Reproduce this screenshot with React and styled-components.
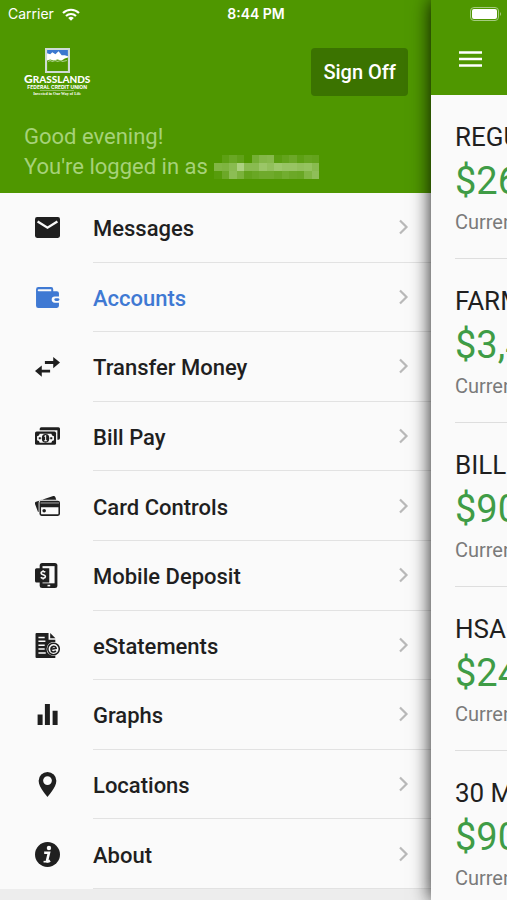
import React from "react";
import styled, { createGlobalStyle } from "styled-components";

const GREEN = "#4f9700";
const INK = "#1f1f1f";

const MailIcon = () => (
  <Icon viewBox="0 0 24 24">
    <rect x="0" y="2" width="24" height="20" rx="2" fill={INK} />
    <path d="M2.5 6.2L12 12.2l9.500-6" fill="none" stroke="#fafafa" strokeWidth="2.200" />
  </Icon>
);

const WalletIcon = () => (
  <Icon viewBox="0 0 24 24">
    <path
      fill="#3f79d3"
      d="M3.200 2h12.300a2 2 0 0 1 2 2v2H21a2 2 0 0 1 2 2v3h-4a3 3 0 0 0 0 6h4v3a2 2 0 0 1-2 2H3.200a2.200 2.200 0 0 1-2.200-2.200V4.200A2.200 2.200 0 0 1 3.200 2z"
    />
    <path d="M3.600 4h12v2h-12a1 1 0 0 1 0-2z" fill="#fafafa" />
    <rect x="18.600" y="12.600" width="4.800" height="2.800" rx="1.400" fill="#3f79d3" />
  </Icon>
);

const TransferIcon = () => (
  <Icon viewBox="0 0 24 24">
    <g fill={INK}>
      <path d="M9.500 6.800h8V2.800L24 8.200l-6.500 5.400V9.600h-8z" />
      <path d="M14.500 15h-8V11L0 16.400l6.500 5.400v-4h8z" />
    </g>
  </Icon>
);

const BillIcon = () => (
  <Icon viewBox="0 0 24 24">
    <path d="M4.500 6V4.500A1.500 1.500 0 0 1 6 3h16.500A1.500 1.500 0 0 1 24 4.500v9a1.500 1.500 0 0 1-1.500 1.500H21.500V6z" fill={INK} />
    <rect x="0" y="7.300" width="20.200" height="12.700" rx="1.500" fill={INK} />
    <path d="M4.500 9.300h11.200a2.600 2.600 0 0 0 2.500 2.400v4a2.600 2.600 0 0 0-2.500 2.400H4.500A2.600 2.600 0 0 0 2 15.700v-4a2.600 2.600 0 0 0 2.500-2.400z" fill="#fafafa" />
    <ellipse cx="10.100" cy="13.700" rx="3.600" ry="4.200" fill={INK} />
    <path d="M3.600 13.700h2M14.600 13.700h2" stroke={INK} strokeWidth="1.800" />
    <path d="M9 12l1.200-.8v5M8.800 16h2.800" stroke="#fafafa" strokeWidth="1" fill="none" />
  </Icon>
);

const CardIcon = () => (
  <Icon viewBox="0 0 24 24">
    <path d="M0 9.500c-.3-1 .1-1.700 1-2L17.500 1.900c.9-.3 1.700.1 2 1l.9 2.700H6.500a3 3 0 0 0-3 3v8.700L2.800 17z" fill={INK} />
    <rect x="4.300" y="6.400" width="19.700" height="14.600" rx="2" fill={INK} />
    <path d="M5.300 8.600h17.700" stroke="#8a8a8a" strokeWidth="1.200" />
    <path d="M5.800 12.700h16.700v6a.8.800 0 0 1-.8.800H6.600a.8.800 0 0 1-.8-.8z" fill="#fafafa" />
    <circle cx="8.800" cy="16" r="1.700" fill={INK} />
  </Icon>
);

const DepositIcon = () => (
  <Icon viewBox="0 0 24 24">
    <rect x="4.500" y="0" width="17" height="24" rx="2.400" fill={INK} />
    <rect x="7.200" y="3" width="11.600" height="16.500" fill="#fafafa" />
    <path d="M1.500 5h12.200v13.700H1.500A1.500 1.500 0 0 1 0 17.200V6.500A1.500 1.500 0 0 1 1.500 5z" fill={INK} />
    <path d="M9.800 8.900c-1-1.200-4-1.100-4 .7 0 2 4.200 1.300 4.200 3.400 0 1.900-3.200 2-4.400.6M7.800 7v1.400M7.800 14.400v1.400" fill="none" stroke="#fafafa" strokeWidth="1.500" />
    <path d="M12 21.700h2.600" stroke="#fafafa" strokeWidth="1.500" />
  </Icon>
);

const StatementIcon = () => (
  <Icon viewBox="0 0 24 24">
    <path d="M1.500 0H13v6.500h6.500V24h-18A1 1 0 0 1 .5 23V1a1 1 0 0 1 1-1z" fill={INK} />
    <path d="M14.600 0l5 5h-5z" fill={INK} />
    <path d="M3.300 4.300h6M3.300 8h6.700M3.300 11.700h6M3.300 15.400h6M3.300 19.100h7" stroke="#fafafa" strokeWidth="1.400" />
    <circle cx="17.800" cy="15.300" r="6.700" fill="#fafafa" />
    <circle cx="17.800" cy="15.300" r="5.500" fill="none" stroke={INK} strokeWidth="1.500" />
    <path d="M15.300 15.600l5-.9c-.3-3-5-2.300-5 .9 0 3 3.200 3.200 4.800 1.600" fill="none" stroke={INK} strokeWidth="1.500" />
  </Icon>
);

const GraphIcon = () => (
  <Icon viewBox="0 0 24 24">
    <path d="M2.500 12h4.800v10H2.500zM9.500 2h4.800v20H9.500zM16.900 8.500h4.800V22h-4.800z" fill={INK} />
  </Icon>
);

const PinIcon = () => (
  <Icon viewBox="0 0 24 24">
    <path d="M12 0a8.500 8.500 0 0 0-8.500 8.500C3.500 15 12 24 12 24s8.500-9 8.500-15.500A8.500 8.500 0 0 0 12 0zm0 12.400a4.200 4.200 0 1 1 0-8.400 4.200 4.200 0 0 1 0 8.400z" fill={INK} />
  </Icon>
);

const InfoIcon = () => (
  <Icon viewBox="0 0 24 24">
    <circle cx="12" cy="12" r="12" fill={INK} />
    <circle cx="13.400" cy="5.700" r="2.100" fill="#fafafa" />
    <path d="M8.800 10.300h4.600l-1.800 7.500c-.3 1.300 1.400 1 2.800.1" fill="none" stroke="#fafafa" strokeWidth="2.500" />
    <path d="M8.200 18.900h4" stroke="#fafafa" strokeWidth="1.600" />
  </Icon>
);

const menu = [
  { label: "Messages", icon: MailIcon },
  { label: "Accounts", icon: WalletIcon, active: true },
  { label: "Transfer Money", icon: TransferIcon },
  { label: "Bill Pay", icon: BillIcon },
  { label: "Card Controls", icon: CardIcon },
  { label: "Mobile Deposit", icon: DepositIcon },
  { label: "eStatements", icon: StatementIcon },
  { label: "Graphs", icon: GraphIcon },
  { label: "Locations", icon: PinIcon },
  { label: "About", icon: InfoIcon },
];

const accounts = [
  { name: "REGU", balance: "$26" },
  { name: "FARM", balance: "$3,4" },
  { name: "BILL", balance: "$90" },
  { name: "HSA", balance: "$24" },
  { name: "30 M", balance: "$90" },
];

// opacity of each block in the masked user name, row by row
const mask = [
  [0, 10, 18, 12, 0, 26, 36, 38, 8, 14, 20, 10, 16, 14],
  [34, 32, 40, 64, 40, 40, 52, 46, 54, 50, 50, 46, 48, 40],
  [6, 20, 42, 30, 14, 18, 22, 22, 18, 24, 20, 18, 34, 44],
];

const Logo = () => (
  <Brand>
    <BrandMark viewBox="0 0 24 24" aria-hidden="true">
      <rect width="24" height="24" fill="#cfdcd6" />
      <rect x="2" y="2" width="20" height="20" fill="#fff" />
      <path d="M2 2h20v6l-3-1-3 0-3-4-3 3-3-2-2 2-3-1z" fill="#3b78cf" />
      <path d="M2 12l3-1 3 1 4-1 4 1 3-2 3-1v13H2z" fill={GREEN} />
      <path d="M3 13l2-1 2 1 3-1 2 1 3-1 2 1 4-1" stroke="#a9cf86" fill="none" />
    </BrandMark>
    <BrandName>
      G<small>RASSLANDS</small>
    </BrandName>
    <BrandSub>FEDERAL CREDIT UNION</BrandSub>
    <BrandRule />
    <BrandTag>Invested in Our Way of Life</BrandTag>
  </Brand>
);

const App = () => {
  return (
    <>
      <GlobalStyle />
      <Screen>
        <StatusBar>
          <Carrier>
            Carrier
            <svg width="18" height="13" viewBox="0 0 18 13" aria-hidden="true">
              <g fill="none" stroke="#fff" strokeWidth="2.200">
                <path d="M1 5a11.500 11.500 0 0 1 16 0" />
                <path d="M4 8a7.300 7.300 0 0 1 10 0" />
              </g>
              <path d="M9 12.800L6.200 10a4 4 0 0 1 5.600 0z" fill="#fff" />
            </svg>
          </Carrier>
          <Clock>8:44 PM</Clock>
          <Battery viewBox="0 0 32 14" aria-hidden="true">
            <rect x=".5" y=".5" width="28" height="13" rx="3.500" fill="none" stroke="#a5cb80" />
            <rect x="2" y="2" width="25" height="10" rx="2" fill="#fff" />
            <path d="M30 5a2.500 2.500 0 0 1 0 4z" fill="#a5cb80" />
          </Battery>
        </StatusBar>

        <Drawer>
          <DrawerHead>
            <HeadRow>
              <Logo />
              <SignOff type="button">Sign Off</SignOff>
            </HeadRow>
            <Greeting>
              <span>Good evening!</span>
              <UserLine>
                You're logged in as
                <MaskedName viewBox="0 0 14 3" preserveAspectRatio="none" shapeRendering="crispEdges">
                  {mask.map((row, y) =>
                    row.map((o, x) => (
                      <rect key={`${x}-${y}`} x={x} y={y} width="1" height="1" fill="#e2f2c8" opacity={o / 100} />
                    ))
                  )}
                </MaskedName>
              </UserLine>
            </Greeting>
          </DrawerHead>
          <Menu>
            {menu.map(({ label, icon: ItemIcon, active }) => (
              <MenuItem key={label}>
                <MenuLink href="#" $active={active}>
                  <ItemIcon />
                  <MenuLabel>
                    {label}
                    <Chevron viewBox="0 0 10 16" aria-hidden="true">
                      <path d="M1.500 1.500L8 8l-6.500 6.500" />
                    </Chevron>
                  </MenuLabel>
                </MenuLink>
              </MenuItem>
            ))}
          </Menu>
        </Drawer>

        <Page>
          <PageHead>
            <MenuButton type="button" aria-label="Menu">
              <svg width="23" height="16" viewBox="0 0 23 16">
                <path d="M0 1.500h23M0 8h23M0 14.500h23" stroke="#fff" strokeWidth="2.600" />
              </svg>
            </MenuButton>
          </PageHead>
          <AccountList>
            {accounts.map((a) => (
              <Account key={a.name}>
                <h2>{a.name}</h2>
                <strong>{a.balance}</strong>
                <span>Current</span>
              </Account>
            ))}
          </AccountList>
        </Page>
      </Screen>
    </>
  );
};

export default App;

const GlobalStyle = createGlobalStyle`
  * {
    box-sizing: border-box;
  }
  body {
    margin: 0;
    background: #ededed;
    font-family: Roboto, "Liberation Sans", sans-serif;
    color: ${INK};
  }
`;

const Screen = styled.div`
  position: relative;
  display: grid;
  grid-template-columns: 85% 15%;
  grid-template-rows: 100%;
  height: 100vh;
  min-height: 780px;
  overflow: hidden;
`;

const StatusBar = styled.div`
  position: absolute;
  inset: 0 0 auto;
  z-index: 2;
  display: grid;
  grid-template-columns: 1fr auto 1fr;
  align-items: center;
  height: 28px;
  padding: 0 5px 0 8px;
  color: #fff;
  font: 400 14px/20px Inter, "Liberation Sans", sans-serif;
`;

const Carrier = styled.span`
  display: flex;
  align-items: center;
  gap: 8px;
`;

const Clock = styled.span`
  padding-left: 2px;
  font-weight: 600;
`;

const Battery = styled.svg`
  justify-self: end;
  width: 32px;
  height: 14px;
`;

const Drawer = styled.aside`
  display: flex;
  flex-direction: column;
  padding-bottom: 11px;
`;

const DrawerHead = styled.header`
  padding: 48px 23px 11px 24px;
  background: ${GREEN};
`;

const HeadRow = styled.div`
  display: flex;
  align-items: flex-start;
  justify-content: space-between;
`;

const Brand = styled.div`
  display: flex;
  flex-direction: column;
  align-items: center;
  color: #fff;
  white-space: nowrap;
`;

const BrandMark = styled.svg`
  width: 25px;
  height: 25px;
`;

const BrandName = styled.div`
  height: 12px;
  font: 900 12px/12px Lato, sans-serif;
  small {
    font-size: 10px;
  }
`;

const BrandSub = styled.div`
  height: 5px;
  font: 700 5px/5px Inter, sans-serif;
`;

const BrandRule = styled.div`
  width: 34px;
  height: 1px;
  background: #8dbb5c;
`;

const BrandTag = styled.div`
  height: 6px;
  font: 700 4px/6px "Liberation Serif", serif;
`;

const SignOff = styled.button`
  height: 48px;
  padding: 0 12px;
  border: 0;
  border-radius: 4px;
  background: #3b7300;
  color: #fff;
  font: 500 20px/24px Roboto, sans-serif;
`;

const Greeting = styled.div`
  display: flex;
  flex-direction: column;
  margin-top: 25px;
  color: #a6d279;
  font-size: 22px;
  line-height: 30px;
  white-space: nowrap;
`;

const UserLine = styled.span`
  display: flex;
  align-items: center;
  gap: 6px;
`;

const MaskedName = styled.svg`
  width: 105px;
  height: 24px;
`;

const Menu = styled.ul`
  flex: 1;
  display: grid;
  grid-auto-rows: 1fr;
  margin: 0;
  padding: 0;
  background: #fafafa;
  list-style: none;
`;

const MenuItem = styled.li`
  display: grid;
  min-height: 56px;
`;

const MenuLink = styled.a`
  display: grid;
  grid-template-columns: 93px 1fr;
  align-items: center;
  color: ${(p) => (p.$active ? "#3f79d3" : INK)};
  font-size: 22px;
  font-weight: 500;
  line-height: 28px;
  text-decoration: none;
`;

const Icon = styled.svg`
  width: 25px;
  height: 25px;
  margin-left: 35px;
`;

const MenuLabel = styled.span`
  align-self: stretch;
  display: flex;
  align-items: center;
  justify-content: space-between;
  padding: 4px 22px 0 0;
  border-bottom: 1px solid #e2e2e2;
`;

const Chevron = styled.svg`
  width: 11px;
  height: 16px;
  margin-bottom: 4px;
  fill: none;
  stroke: #b9b9b9;
  stroke-width: 2.2;
`;

const Page = styled.main`
  position: relative;
  z-index: 1;
  display: flex;
  flex-direction: column;
  background: #fafafa;
  box-shadow: 0 0 18px rgba(0, 0, 0, 0.9);
`;

const PageHead = styled.header`
  padding: 43px 0 20px 24px;
  background: ${GREEN};
`;

const MenuButton = styled.button`
  display: grid;
  place-items: center start;
  width: 32px;
  height: 32px;
  padding: 0 0 0 4px;
  border: 0;
  background: none;
`;

const AccountList = styled.div`
  flex: 1;
  min-height: 0;
  padding-left: 24px;
  overflow: hidden;
`;

const Account = styled.section`
  display: flex;
  flex-direction: column;
  height: 164px;
  padding-top: 26px;
  border-bottom: 1px solid #dedede;
  white-space: nowrap;

  h2 {
    margin: 0;
    font-size: 26px;
    font-weight: 400;
    line-height: 32px;
  }
  strong {
    color: #3f9c46;
    font-size: 38px;
    font-weight: 400;
    line-height: 56px;
  }
  span {
    color: #7a7a7a;
    font-size: 20px;
    line-height: 26px;
  }
`;
